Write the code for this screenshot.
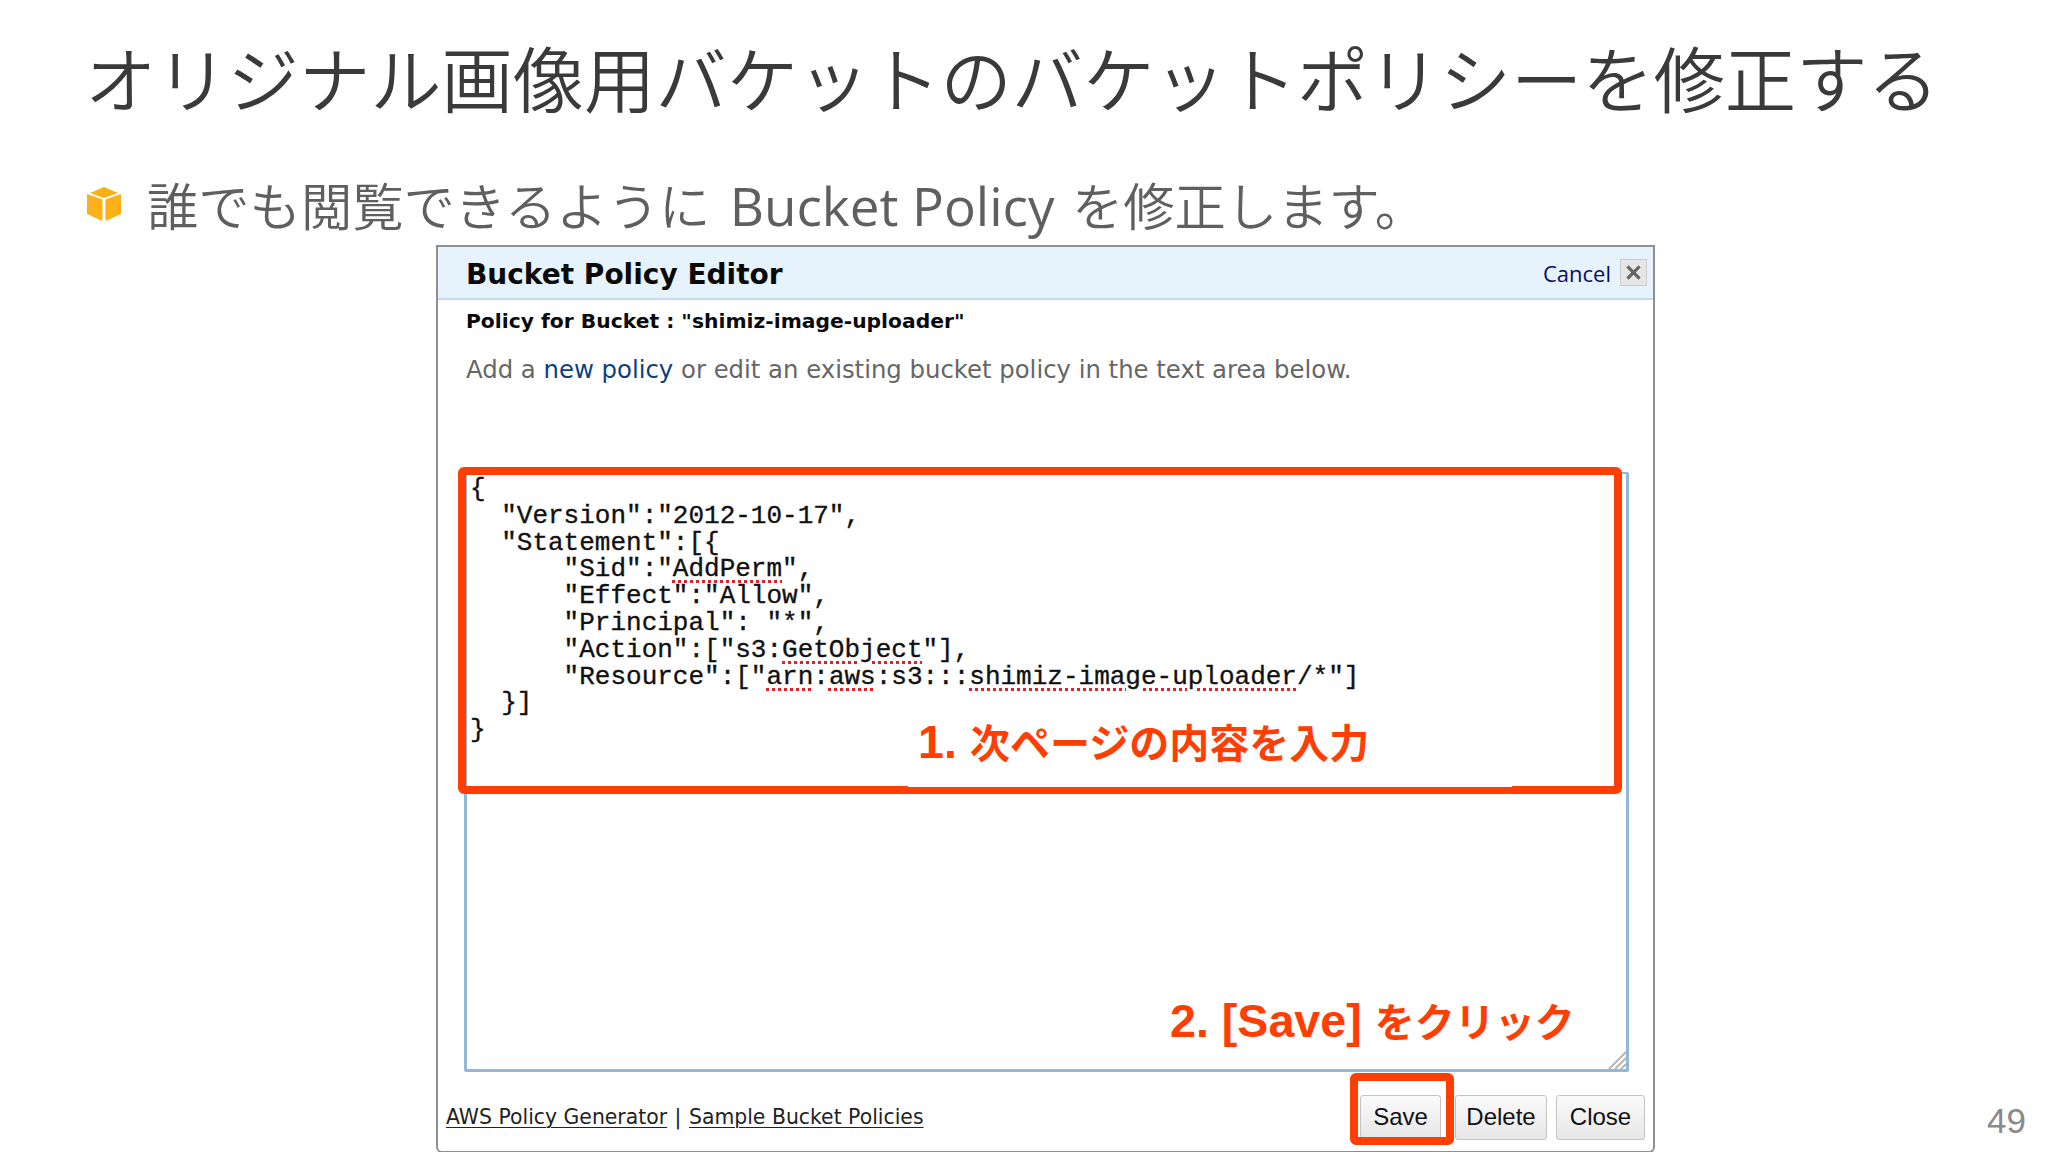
<div class="slide">
  <h1 class="title">オリジナル画像用バケットのバケットポリシーを修正する</h1>
  <div class="bullet">
    <svg class="cube" viewBox="0 0 34 34" aria-hidden="true">
      <path d="M17 0 L31 6 L17 11 L3 6 Z" fill="#fbb117" />
      <path d="M0 7 L15.5 12.5 L15.5 34 L0 27 Z" fill="#fbb117" />
      <path d="M34 7 L18.5 12.5 L18.5 34 L34 27 Z" fill="#fbb117" />
    </svg>
    <span>誰でも閲覧できるように <span class="latin">Bucket Policy</span> を修正します。</span>
  </div>

  <div class="dialog">
    <div class="head">
      <span class="head-title">Bucket Policy Editor</span>
      <span class="cancel">Cancel</span>
      <span class="x">
        <svg viewBox="0 0 14 14" width="17" height="17" aria-hidden="true"><path d="M2 2 L12 12 M12 2 L2 12" stroke="#666" stroke-width="2.6" /></svg>
      </span>
    </div>
    <div class="body">
      <div class="for">Policy for Bucket : "shimiz-image-uploader"</div>
      <div class="add">Add a <span class="link">new policy</span> or edit an existing bucket policy in the text area below.</div>
      <div class="area">
<pre class="code">{'{'}
  "Version":"2012-10-17",
  "Statement":[{'{'}
      "Sid":"<u>AddPerm</u>",
      "Effect":"Allow",
      "Principal": "*",
      "Action":["s3:<u>GetObject</u>"],
      "Resource":["<u>arn</u>:<u>aws</u>:s3:::<u>shimiz-image-uploader</u>/*"]
  {'}'}]
{'}'}</pre>
        <svg class="grip" viewBox="0 0 18 18" aria-hidden="true"><path d="M1 18 L18 1 M7 18 L18 7 M13 18 L18 13" stroke="#b5b5b5" stroke-width="2" fill="none" /></svg>
      </div>
      <div class="foot">
        <div class="links"><span class="ul">AWS Policy Generator</span> <span class="sep">|</span> <span class="ul">Sample Bucket Policies</span></div>
        <div class="btns">
          <span class="btn save">Save</span>
          <span class="btn delete">Delete</span>
          <span class="btn close">Close</span>
        </div>
      </div>
    </div>
  </div>

  <div class="mark mark-area"></div>
  <div class="label label-1"><span class="lat">1.</span> 次ページの内容を入力</div>
  <div class="label label-2"><span class="lat">2. [Save]</span> をクリック</div>
  <div class="mark mark-save"></div>
  <div class="page">49</div>
</div>

<style>
  :global(body) { margin: 0; background: #fff; }
  .slide {
    position: relative;
    width: 2048px;
    height: 1152px;
    overflow: hidden;
    background: #fff;
    box-sizing: border-box;
    padding: 34px 0 0 87px;
    font-family: "Noto Sans CJK JP", sans-serif;
  }
  .title {
    margin: 0 0 0 -2px;
    font-size: 71.3px;
    line-height: 84px;
    font-weight: 350;
    color: #3a3a3a;
    white-space: nowrap;
  }
  .bullet {
    display: flex;
    align-items: center;
    gap: 26px;
    margin-top: 51px;
    height: 70px;
    font-size: 51.3px;
    font-weight: 350;
    color: #5f5f5f;
    white-space: nowrap;
    font-family: "Noto Sans CJK JP", sans-serif;
  }
  .latin { font-family: "Open Sans", sans-serif; font-weight: 400; font-size: 53px; margin: 0 6px 0 8px; }
  .cube { width: 34px; height: 34px; flex: none; }
  .dialog {
    width: 1219px;
    height: 908px;
    margin: 6px 0 0 349px;
    box-sizing: border-box;
    border: 2px solid #8f8f8f;
    border-radius: 0 0 6px 6px;
    font-family: "DejaVu Sans", sans-serif;
  }
  .head {
    display: flex;
    align-items: center;
    height: 53px;
    box-sizing: border-box;
    padding: 0 6px 0 28px;
    background: #e6f2fc;
    border-bottom: 2px solid #c5dcf0;
  }
  .head-title { font-weight: 700; font-size: 28px; color: #0a0a0a; flex: 1; padding-top: 3px; }
  .cancel { font-family: "Open Sans", sans-serif; font-size: 22px; color: #0b0b66; margin-right: 9px; }
  .x {
    display: flex;
    align-items: center;
    justify-content: center;
    width: 27px;
    height: 27px;
    box-sizing: border-box;
    border: 1px solid #ccc;
    background: #e6e6e6;
  }
  .body { padding: 0 8px 0 26px; }
  .for { font-weight: 700; font-size: 20.3px; color: #0a0a0a; margin-top: 8px; line-height: 26px; padding-left: 2px; white-space: nowrap; }
  .add { font-size: 24.35px; color: #666; margin-top: 20px; line-height: 32px; padding-left: 2px; white-space: nowrap; }
  .link { color: #0d3f80; }
  .area {
    position: relative;
    width: 1165px;
    height: 600px;
    margin: 86px 0 0 0;
    box-sizing: border-box;
    border: 3px solid #93b7dc;
    border-top-width: 2px;
    border-radius: 2px;
  }
  .code {
    margin: 0;
    padding: 2px 0 0 3px;
    font-family: "Liberation Mono", monospace;
    font-size: 26px;
    line-height: 26.8px;
    color: #111;
    -webkit-text-stroke: 0.35px #111;
  }
  .code u {
    text-decoration: underline dotted #e0202a 2.5px;
    text-underline-offset: 4px;
  }
  .grip { position: absolute; right: 0; bottom: 0; width: 18px; height: 18px; }
  .foot { display: flex; align-items: center; justify-content: space-between; margin: 22px 0 0 -18px; height: 46px; }
  .links { font-size: 20.4px; color: #222; white-space: nowrap; }
  .sep { margin: 0 1px; }
  .ul { text-decoration: underline; text-underline-offset: 3px; text-decoration-thickness: 1px; }
  .btns { display: flex; gap: 9px; font-family: "Liberation Sans", sans-serif; font-size: 24px; color: #111; }
  .btn {
    display: flex;
    align-items: center;
    justify-content: center;
    height: 45px;
    box-sizing: border-box;
    border: 1px solid #c4c4c4;
    border-radius: 3px;
    background: linear-gradient(#fbfbfb, #e6e6e6);
  }
  .save { width: 81px; margin-right: 5px; }
  .delete { width: 92px; }
  .close { width: 89px; }
  .mark {
    position: absolute;
    box-sizing: border-box;
    border: 8.5px solid #ff3e04;
    border-radius: 6px;
  }
  .mark-area { left: 458px; top: 467px; width: 1164px; height: 327px; }
  .mark-save { left: 1350px; top: 1073px; width: 104px; height: 72px; }
  .label {
    position: absolute;
    font-family: "Liberation Sans", "Noto Sans CJK JP", sans-serif;
    font-weight: 700;
    color: #ff3e04;
    font-size: 40px;
    line-height: 50px;
    white-space: nowrap;
  }
  .lat { font-size: 46.6px; margin-right: 2px; }
  .label-1 { left: 908px; top: 717px; width: 604px; height: 70px; padding: 0 0 0 10px; box-sizing: border-box; background: #fff; }
  .label-2 { left: 1170px; top: 996px; }
  .page {
    position: absolute;
    left: 1987px;
    top: 1100px;
    font-family: "Liberation Sans", sans-serif;
    font-size: 35px;
    line-height: 42px;
    color: #8a8a8a;
  }
</style>
